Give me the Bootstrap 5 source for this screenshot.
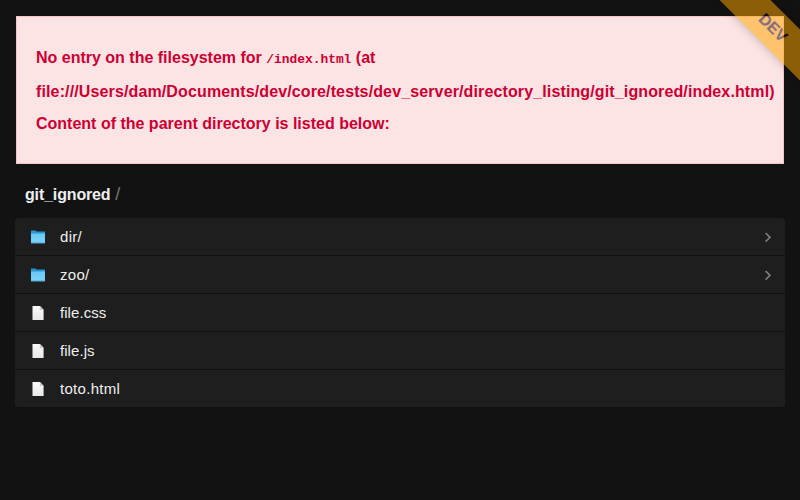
<!DOCTYPE html>
<html lang="en" data-bs-theme="dark">
<head>
<meta charset="utf-8">
<meta name="viewport" content="width=device-width, initial-scale=1">
<title>git_ignored</title>
<link href="https://cdn.jsdelivr.net/npm/bootstrap@5.3.0/dist/css/bootstrap.min.css" rel="stylesheet">
<style>
body { background: #121212; color: #eee; font-family: "Liberation Sans", Arial, sans-serif; font-size: 16px; min-height: 100vh; }
.error-box { margin: 16px 16px 0; height: 148px; padding: 24px 19px 0; background: #fce4e4; border: 1px solid #fcc2c3; color: #cc0033; font-weight: 700; line-height: 33px; white-space: nowrap; }
.error-box code { font: 700 12.9px/1 "Liberation Mono", monospace; color: inherit; }
.error-box .path { letter-spacing: .129px; line-height: 35px; margin-bottom: -2px; }
.crumbs { padding: 19px 25px 0; height: 54px; line-height: 24px; font-weight: 700; color: #eee; letter-spacing: -.15px; }
.crumbs .sep { color: #777; font-weight: 400; font-size: 18px; line-height: 1; }
.listing { margin: 0 15px; border-radius: 3px; overflow: hidden; font-size: 15px; }
.entry { height: 37px; padding: 0 12px 0 15px; background: #1e1e1e; color: #eee; text-decoration: none; }
.entry + .entry { margin-top: 1px; }
.entry .name { margin-left: 14px; padding-top: 2px; letter-spacing: .06px; }
.entry .wide { letter-spacing: .3px; }
.ribbon-corner { position: fixed; top: 0; right: 0; width: 100px; height: 100px; overflow: hidden; pointer-events: none; opacity: .52; }
.ribbon { position: absolute; left: -27px; top: 10px; width: 200px; height: 36px; line-height: 36px; transform: rotate(45deg); background: orange; color: #18001c; box-shadow: 0 0 10px rgba(0,0,0,.5); text-shadow: 0 0 2px rgba(0,0,80,.35); }
</style>
<script src="https://cdn.jsdelivr.net/npm/bootstrap@5.3.0/dist/js/bootstrap.bundle.min.js"></script>
</head>
<body class="overflow-hidden">
<svg width="0" height="0" class="position-absolute">
  <defs>
    <linearGradient id="folderFill" x2="0" y2="1"><stop stop-color="#6ac8f7"/><stop offset="1" stop-color="#7cd4fb"/></linearGradient>
    <linearGradient id="pageFill" x2="0" y2="1"><stop stop-color="#fafafa"/><stop offset="1" stop-color="#e8e8e8"/></linearGradient>
    <symbol id="folder" viewBox="0 0 16 16"><path d="M1 1.500h4.500l1 1h8q.5 0 .5.5v3H1z" fill="#2795d2"/><path d="M1 4.500h14v9.200q0 .5-.5.5h-13q-.5 0-.5-.5z" fill="url(#folderFill)"/><path d="M1 13.500h14v.7H1z" fill="#4ba5d0"/></symbol>
    <symbol id="page" viewBox="0 0 16 16"><path d="M2.500 1h7.500l3.600 3.800V15H2.500z" fill="url(#pageFill)"/><path d="M9.800 1v4h3.800z" fill="#c9c9c9"/></symbol>
    <symbol id="chevron" viewBox="0 0 10 12"><path d="M2.600 2 7 6.300l-4.400 4.300" fill="none" stroke="#7c7c7c" stroke-width="1.700"/></symbol>
  </defs>
</svg>
<header class="error-box">
  <div>No entry on the filesystem for <code>/index.html</code> (at</div>
  <div class="path">file:///Users/dam/Documents/dev/core/tests/dev_server/directory_listing/git_ignored/index.html)</div>
  <div>Content of the parent directory is listed below:</div>
</header>
<nav class="crumbs">git_ignored<span class="sep"> /</span></nav>
<main class="listing d-flex flex-column">
  <a class="entry d-flex align-items-center" href="#">
    <svg width="16" height="16"><use href="#folder"/></svg>
    <span class="name wide">dir/</span>
    <svg class="ms-auto" width="10" height="12"><use href="#chevron"/></svg>
  </a>
  <a class="entry d-flex align-items-center" href="#">
    <svg width="16" height="16"><use href="#folder"/></svg>
    <span class="name wide">zoo/</span>
    <svg class="ms-auto" width="10" height="12"><use href="#chevron"/></svg>
  </a>
  <a class="entry d-flex align-items-center" href="#">
    <svg width="16" height="16"><use href="#page"/></svg>
    <span class="name">file.css</span>
  </a>
  <a class="entry d-flex align-items-center" href="#">
    <svg width="16" height="16"><use href="#page"/></svg>
    <span class="name">file.js</span>
  </a>
  <a class="entry d-flex align-items-center" href="#">
    <svg width="16" height="16"><use href="#page"/></svg>
    <span class="name wide">toto.html</span>
  </a>
</main>
<div class="ribbon-corner"><div class="ribbon text-center fw-bold">DEV</div></div>
</body>
</html>
